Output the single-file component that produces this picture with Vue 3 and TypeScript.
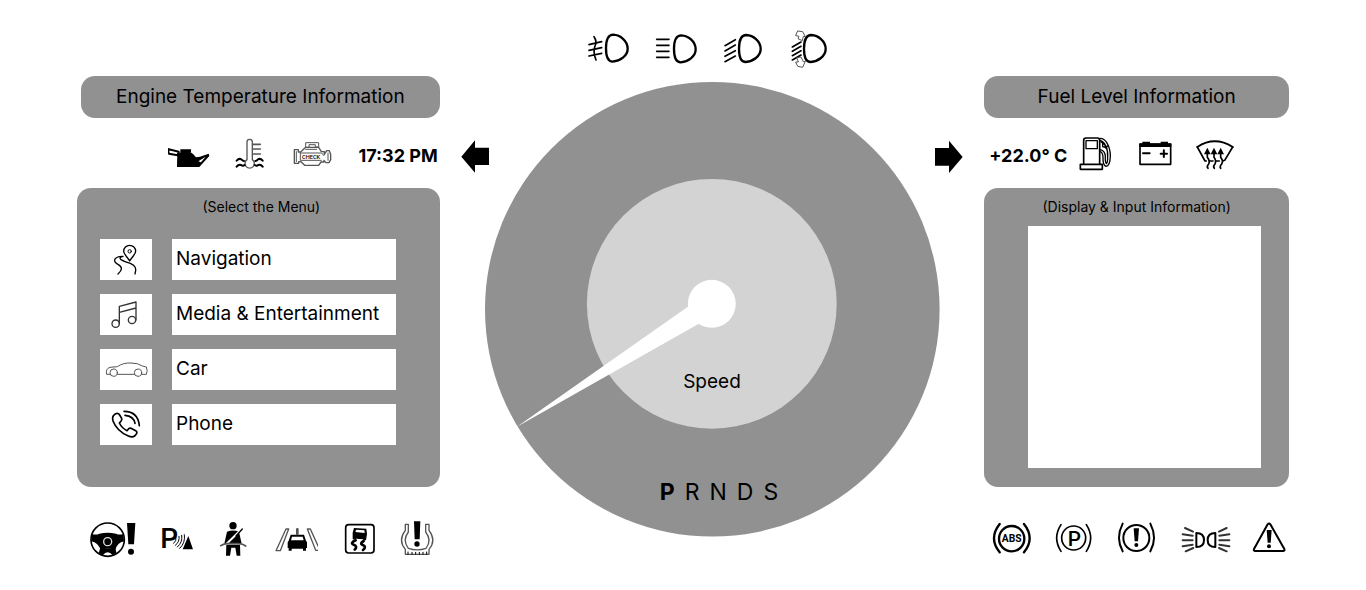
<script setup lang="ts">
import { ref } from 'vue'

const gears = ['P', 'R', 'N', 'D', 'S']
const activeGear = ref('P')
const note = ref('')
const lampD =
  'M130 44C111 44 108 65 108 85C108 108 112 125 128 125C150 123 173 108 173 86C173 62 150 45 130 44Z'
</script>

<template>
  <main class="dashboard">
    <section class="side left">
      <h2 class="banner">Engine Temperature Information</h2>

      <div class="status status-left">
        <div class="icons">
          <svg class="icon" viewBox="42 27 132 132" aria-label="Oil pressure">
            <path class="solid" d="M70 84L86 80H108L118 88L126 97L138 95L164 86L166 93L136 126H69Z" />
            <path class="solid" d="M79 73H111V81H102V86H87V81H79Z" />
            <path class="line w6" d="M41 72L74 80L71 91L45 86Z" />
            <path d="M133 109L155 95L141 112Z" fill="#fff" />
          </svg>
          <svg class="icon" viewBox="228 27 132 132" aria-label="Coolant temperature">
            <path class="line gray w4" d="M279 104V51a8 8 0 0 1 16 0V104a14 14 0 1 1 -16 0Z" />
            <path class="line gray w5" d="M296 58H319M296 72H319M296 87H319" />
            <path class="line w6" d="M248 107q7-8 14-4q5 5 8 5M304 108q4 0 8-5q7-4 14 4M248 125q6-8 13-5q6 4 11 0M302 120q6 4 11 0q7-3 13 5" />
          </svg>
          <svg class="icon" viewBox="414 27 132 132" aria-label="Check engine">
            <path class="line gray" d="M455 66V53H494V66H484V59H465V66Z" />
            <path class="line gray w4" d="M421 74H433V81H440L455 67H494L502 80H511V88L518 77H526L530 88V104L525 113H516L510 106V111H501L494 121H452L441 110H434V115H421Z" />
            <path class="line gray" d="M427 80V110M439 84H503L510 92M439 84V106H502M455 73H488M522 84V106" />
            <text class="check" x="444" y="101">CHECK</text>
          </svg>
        </div>
        <time class="reading">17:32 PM</time>
        <svg class="arrow" viewBox="375 27 90 132" aria-label="Left turn signal">
          <path class="solid" d="M379 95L420 46V68H462V120H420V143Z" />
        </svg>
      </div>

      <nav class="panel menu" aria-labelledby="menu-title">
        <h3 id="menu-title" class="caption">(Select the Menu)</h3>
        <button type="button" class="item">
          <span class="tile">
            <svg viewBox="75 162 156 123" aria-hidden="true">
              <path class="line w4" d="M164 228C157 215 146 208 146 199a18 18 0 0 1 36 0C182 208 171 215 164 228Z" />
              <circle class="line" cx="164" cy="199" r="5" />
              <path class="line w4" d="M144 214Q127 213 120 222Q115 231 130 239Q149 250 129 267M144 214Q130 218 138 224Q148 231 166 235Q189 244 180 267" />
            </svg>
          </span>
          <span class="label">Navigation</span>
        </button>
        <button type="button" class="item">
          <span class="tile">
            <svg viewBox="75 326 156 123" aria-hidden="true">
              <circle class="line w4 dark" cx="122" cy="415" r="11" />
              <circle class="line w4 dark" cx="171" cy="404" r="11" />
              <path class="line w4 dark" d="M133 415V363L183 350V404M133 381L183 368" />
            </svg>
          </span>
          <span class="label">Media &amp; Entertainment</span>
        </button>
        <button type="button" class="item">
          <span class="tile">
            <svg viewBox="75 490 156 123" aria-hidden="true">
              <path class="line gray" d="M105 566H95Q91 549 105 545L127 543Q144 531 168 532Q190 532 202 541L214 544Q219 556 214 566H200M178 566H127" />
              <circle class="line gray" cx="116" cy="561" r="11" />
              <circle class="line gray" cx="189" cy="561" r="11" />
            </svg>
          </span>
          <span class="label">Car</span>
        </button>
        <button type="button" class="item">
          <span class="tile">
            <svg viewBox="75 654 156 123" aria-hidden="true">
              <path class="line w5" d="M116 688L122 683Q130 680 134 687L140 697Q142 703 137 707L133 711Q141 727 156 734L161 728Q165 725 171 728L182 734Q188 738 184 744L179 750Q172 755 160 750Q126 736 114 705Q111 694 116 688Z" />
              <path class="line w5" d="M147 676Q189 676 193 719M150 688Q176 690 180 712" />
            </svg>
          </span>
          <span class="label">Phone</span>
        </button>
      </nav>

      <div class="warnings warnings-left">
        <svg class="lamp" viewBox="24 21 144 132" aria-label="Power steering">
          <circle class="line w5" cx="83" cy="89" r="50" />
          <path class="solid" d="M36 72Q48 76 58 71Q83 65 108 71Q118 76 130 72L132 94Q112 98 106 120Q83 112 62 120Q54 98 34 94Z" />
          <path class="solid" d="M60 116L106 116L110 130L98 136Q83 118 68 136L56 130Z" />
          <circle cx="83" cy="95" r="12" fill="none" stroke="#ddd" stroke-width="4" />
          <path class="solid" d="M141 39H166L162 103H145Z" />
          <circle class="solid" cx="153" cy="125" r="9" />
        </svg>
        <svg class="lamp" viewBox="207 21 144 132" aria-label="Parking sensor">
          <text class="park" x="241" y="115">P</text>
          <path class="line" d="M281 100q9-7 7-17M286 106q14-11 11-27M292 111q17-14 13-35M299 115q18-16 14-41" />
          <path class="solid" d="M308 118L325 78L339 118Z" />
        </svg>
        <svg class="lamp" viewBox="387 21 144 132" aria-label="Seat belt">
          <circle class="solid" cx="459" cy="47" r="11" />
          <path class="solid" d="M441 65Q459 58 477 65L485 101H433Z" />
          <path class="solid" d="M439 104H480L481 137H470L466 113H454L450 137H438Z" />
          <path d="M440 101L483 59" stroke="#fff" stroke-width="6" />
          <path class="line w4" d="M468 78L487 57" />
          <path class="line w5 gray" d="M422 107Q432 101 442 101H476Q488 101 497 108" />
        </svg>
        <svg class="lamp" viewBox="30 21 144 132" aria-label="Lane assist">
          <path class="line gray w4" d="M78 57H86L61 122H48ZM142 57H151L180 121H167Z" />
          <path class="solid" d="M92 74H132L138 92L141 97V114H138V122H129V116H95V122H86V114H83V97L86 92Z" />
          <path d="M96 80H128L131 91H93Z" fill="#fff" />
          <path class="line gray w8" d="M112 58V72" />
        </svg>
        <svg class="lamp" viewBox="213 21 144 132" aria-label="Traction control">
          <rect class="line w5" x="257" y="44" width="85" height="85" rx="9" />
          <path class="solid" d="M282 54L319 56L321 72L318 91L310 90V88L288 86L287 89L278 88V68Z" />
          <path d="M289 59L313 61L314 69L286 66Z" fill="#fff" />
          <path class="line w8" d="M287 91Q269 99 281 104Q294 109 284 119M311 93Q298 101 308 105Q321 110 309 120" />
        </svg>
        <svg class="lamp" viewBox="396 21 144 132" aria-label="Tyre pressure">
          <path class="line gray w4" d="M436 43V61Q413 91 436 118V133H507V118Q530 91 507 61V43H497V66Q517 91 498 115Q471 124 445 115Q426 91 445 66V43Z" />
          <path class="line" d="M444 133V126M456 133V127M467 133V127M478 133V127M489 133V127M500 133V126" />
          <path class="solid" d="M462 34H481L479 88H464Z" />
          <circle class="solid" cx="471" cy="102" r="8" />
        </svg>
      </div>
    </section>

    <section class="center">
      <div class="headlights">
        <svg class="icon" viewBox="48 18 132 132" aria-label="Fog lights">
          <path class="line w7" :d="lampD" />
          <path class="line w5" d="M57 74L95 65M57 91L95 83M57 108L95 100M72 50Q82 64 75 78Q68 95 78 120" />
        </svg>
        <svg class="icon" viewBox="249 18 132 132" aria-label="High beam">
          <path class="line w7" :d="lampD" transform="translate(204 2)" />
          <path class="line w5" d="M260 58H297M260 76H297M260 94H297M260 112H297" />
        </svg>
        <svg class="icon" viewBox="450 18 132 132" aria-label="Low beam">
          <path class="line w7" :d="lampD" transform="translate(399 1)" />
          <path class="line w5" d="M465 77L496 59M465 93L496 75M465 109L496 92M465 125L496 108" />
        </svg>
        <svg class="icon" viewBox="651 18 132 132" aria-label="Headlight levelling">
          <path class="line w7" :d="lampD" transform="translate(594 1)" />
          <path class="line w5" d="M667 81L693 66M667 94L693 79M667 107L693 92M667 120L693 105" />
          <path class="line gray" d="M684 33L698 35L706 50L700 49L697 62L684 56L687 49L678 47ZM681 113L693 111L700 125L706 124L698 142L683 139L677 126L684 126Z" />
        </svg>
      </div>

      <div class="dial">
        <svg class="face" viewBox="0 0 455 455" aria-hidden="true">
          <circle cx="227.5" cy="227.5" r="227.5" fill="#919191" />
          <circle cx="227" cy="222" r="125" fill="#d3d3d3" />
          <path d="M32 345L203 225L227 222L214 242Z" fill="#fff" />
          <circle cx="227" cy="222" r="24" fill="#fff" />
        </svg>
        <div class="readout">
          <p class="speed">Speed</p>
          <p class="gears">
            <span v-for="gear in gears" :key="gear" :class="{ active: gear === activeGear }">{{ gear }}</span>
          </p>
        </div>
      </div>
    </section>

    <section class="side right">
      <h2 class="banner">Fuel Level Information</h2>

      <div class="status status-right">
        <svg class="arrow" viewBox="102 27 90 132" aria-label="Right turn signal">
          <path class="solid" d="M188 96L147 47V69H105V122H147V144Z" />
        </svg>
        <span class="reading">+22.0° C</span>
        <div class="icons">
          <svg class="icon" viewBox="12 27 132 132" aria-label="Fuel">
            <path class="line w5" d="M44 117V46Q44 39 51 39H85Q92 39 92 46V117" />
            <rect class="line w4" x="51" y="47" width="34" height="24" />
            <rect class="line w5" x="34" y="118" width="66" height="15" />
            <path class="line w4" d="M93 40Q107 40 115 56Q124 72 124 94Q123 124 111 124Q101 121 102 96Q101 82 94 80M93 46Q104 49 110 62Q117 76 116 96Q116 114 112 116Q108 111 109 94Q108 78 94 74M96 50L108 60V67L101 65V52M117 62L110 69" />
          </svg>
          <svg class="icon" viewBox="192 27 132 132" aria-label="Battery">
            <rect class="line w5" x="213" y="58" width="92" height="60" />
            <path class="solid" d="M211 55H220V50H243V55H275V50H297V55H307V66H211Z" />
            <path class="line w6" d="M222 85H242M275 86H294M284.5 76V96" />
          </svg>
          <svg class="icon" viewBox="372 27 132 132" aria-label="Windscreen defrost">
            <path class="line w6" d="M385 66Q437 32 491 66" />
            <path class="line w5" d="M385 66L408 108H412M421 108H432M441 108H451M461 108L467 106L491 66" />
            <path class="line w5" d="M415 82V97Q424 107 419 117Q412 124 417 130M435 82V97Q443 107 438 117Q431 124 436 130M455 82V97Q464 107 458 117Q451 124 455 130" />
            <path class="solid" d="M405 88L415 68L425 88ZM425 88L435 68L445 88ZM445 88L455 68L465 88Z" />
          </svg>
        </div>
      </div>

      <div class="panel display">
        <label class="caption" for="display-input">(Display &amp; Input Information)</label>
        <textarea id="display-input" v-model="note" class="screen"></textarea>
      </div>

      <div class="warnings warnings-right">
        <svg class="lamp wide" viewBox="12 21 168 132" aria-label="ABS">
          <circle class="line w7" cx="95" cy="86" r="38" />
          <path class="line w7" d="M59 42Q25 85 59 127M132 42Q166 85 132 127" />
          <text class="abs" x="95" y="97">ABS</text>
        </svg>
        <svg class="lamp wide" viewBox="204 21 168 132" aria-label="Parking brake">
          <circle class="line w5" cx="281" cy="84" r="36" />
          <path class="line w5" d="M243 44Q217 84 243 124M319 44Q345 84 319 124" />
          <text class="brake" x="283" y="107">P</text>
        </svg>
        <svg class="lamp wide" viewBox="399 21 168 132" aria-label="Brake warning">
          <circle class="line w6" cx="469" cy="84" r="39" />
          <path class="line w6" d="M428 41Q406 84 428 124M511 41Q533 84 511 124" />
          <path class="solid" d="M461 55H477L474 94H464Z" />
          <circle class="solid" cx="469" cy="105" r="6" />
        </svg>
        <svg class="lamp wide" viewBox="51 21 168 132" aria-label="Side lights">
          <path class="line w6" d="M109 69V111Q132 111 132 90Q132 69 109 69ZM166 69V111Q143 111 143 90Q143 69 166 69Z" />
          <path class="line w6 dark" d="M75 54L99 65M68 73L98 77M68 91H98M68 109L98 104M77 124L100 114M200 54L177 65M208 73L178 77M208 91H178M208 109L178 104M200 124L177 114" />
        </svg>
        <svg class="lamp" viewBox="243 21 144 132" aria-label="General warning">
          <path class="line w6" d="M323 43Q327 38 331 43L373 117Q375 123 369 123H286Q280 123 282 117Z" />
          <path class="solid" d="M320 60H335L332 98H323Z" />
          <circle class="solid" cx="327" cy="109" r="6" />
        </svg>
      </div>
    </section>
  </main>
</template>

<style>
body {
  margin: 0;
  background: #fff;
}
</style>

<style scoped>
.dashboard {
  display: grid;
  grid-template-columns: 363fr 455fr 305fr;
  gap: 45px;
  padding: 26px 77px;
  color: #000;
  font-family: Inter, 'Noto Sans', sans-serif;
  font-size: 19px;
  line-height: 24px;
}
.side {
  display: flex;
  flex-direction: column;
  padding-top: 50px;
}
h2,
h3,
p {
  margin: 0;
  font-weight: 400;
}
.banner {
  padding: 9px 0;
  border-radius: 14px;
  background: #919191;
  font-size: 19px;
  text-align: center;
}
.left .banner {
  margin-left: 4px;
}
.status {
  display: flex;
  align-items: center;
  padding: 16px 0 10px;
}
.status-left {
  justify-content: flex-end;
  gap: 22px;
  margin-right: -50px;
}
.status-right {
  margin-left: -50px;
}
.status-right .reading {
  margin: 0 6px 0 25px;
}
.icons {
  display: flex;
  gap: 18px;
}
.status-right .icons {
  gap: 16px;
}
.icon,
.arrow,
.lamp {
  display: block;
  flex: none;
  width: 44px;
  height: 44px;
}
.arrow {
  width: 30px;
}
.lamp {
  width: 48px;
}
.lamp.wide {
  width: 56px;
}
.reading {
  font-size: 18px;
  font-weight: 700;
  white-space: nowrap;
}
.panel {
  display: flex;
  flex-direction: column;
  border-radius: 14px;
  background: #919191;
}
.caption {
  font-size: 14px;
  line-height: 18px;
  text-align: center;
}
.menu {
  gap: 14px;
  padding: 10px 44px 42px 23px;
}
.menu .caption {
  margin: 0 -27px 9px 0;
}
.item {
  display: flex;
  gap: 20px;
  padding: 0;
  border: 0;
  background: none;
  color: inherit;
  font: inherit;
  text-align: left;
  cursor: pointer;
}
.tile,
.label {
  height: 41px;
  background: #fff;
}
.tile {
  flex: none;
  width: 52px;
}
.tile svg {
  display: block;
  width: 52px;
  height: 41px;
}
.label {
  flex: 1;
  padding-left: 4px;
  line-height: 40px;
}
.display {
  gap: 10px;
  padding: 10px 28px 19px 44px;
}
.display .caption {
  margin-right: 16px;
}
.screen {
  box-sizing: border-box;
  width: 100%;
  height: 242px;
  padding: 8px;
  border: 0;
  background: #fff;
  font: inherit;
  resize: none;
}
.warnings {
  display: flex;
  justify-content: space-between;
  padding-top: 30px;
}
.warnings-left {
  padding-left: 11px;
}
.headlights {
  display: flex;
  justify-content: center;
  gap: 23px;
  padding: 0 6px 12px 0;
}
.dial {
  display: grid;
}
.face,
.readout {
  grid-area: 1 / 1;
}
.face {
  display: block;
  width: 100%;
  overflow: visible;
}
.readout {
  display: flex;
  flex-direction: column;
  justify-content: flex-end;
  align-items: center;
  gap: 86px;
  padding-bottom: 33px;
}
.gears {
  display: flex;
  gap: 10px;
  padding-left: 14px;
  font-size: 23px;
}
.gears .active {
  font-weight: 700;
}
.solid {
  fill: #000;
}
.line {
  fill: none;
  stroke: #000;
  stroke-width: 3;
  stroke-linecap: round;
  stroke-linejoin: round;
}
.dark {
  stroke: #333;
}
.gray {
  stroke: #555;
}
.w4 {
  stroke-width: 4;
}
.w5 {
  stroke-width: 5;
}
.w6 {
  stroke-width: 6;
}
.w7 {
  stroke-width: 7;
}
.w8 {
  stroke-width: 8;
}
svg text {
  font-family: Roboto, sans-serif;
}
.check {
  font-size: 17px;
  font-weight: 500;
}
.park {
  font-size: 84px;
  font-weight: 500;
}
.abs {
  font-size: 31px;
  font-weight: 700;
  text-anchor: middle;
}
.brake {
  font-size: 62px;
  font-weight: 500;
  text-anchor: middle;
}
</style>
